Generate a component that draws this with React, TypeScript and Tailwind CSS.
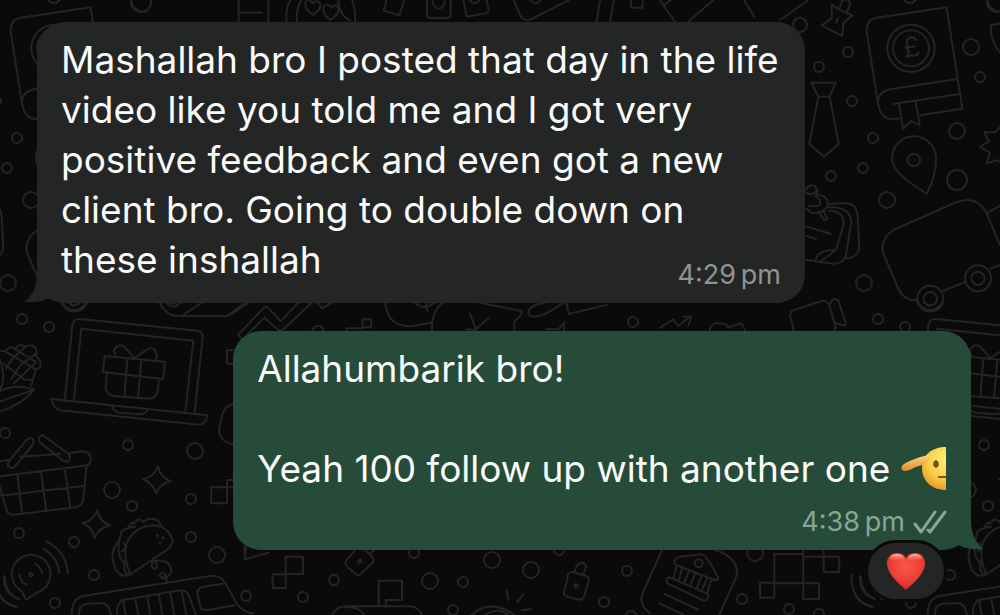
import type { ReactNode } from "react";

type Dot = [number, number, number];

const dots: Dot[] = [
  [141, 2, 10],
  [22, 319, 5],
  [49, 327, 5],
  [5, 433, 5],
  [128, 445, 5],
  [195, 451, 8],
  [112, 490, 8],
  [132, 506, 5],
  [191, 499, 5],
  [19, 533, 5],
  [74, 542, 5],
  [94, 575, 5],
  [55, 603, 5],
  [191, 537, 5],
  [217, 555, 8],
  [246, 596, 5],
  [303, 597, 5],
  [334, 580, 5],
  [414, 553, 5],
  [430, 581, 8],
  [463, 582, 5],
  [492, 560, 8],
  [531, 570, 8],
  [453, 610, 5],
  [559, 550, 5],
  [627, 571, 5],
  [604, 602, 5],
  [631, 617, 6],
  [755, 553, 8],
  [742, 599, 5],
  [789, 609, 5],
  [819, 614, 5],
  [318, 332, 6],
  [633, 322, 5],
  [800, 25, 7],
  [910, -3, 6],
  [848, 52, 5],
  [819, 67, 5],
  [852, 101, 5],
  [831, 176, 5],
  [873, 138, 5],
  [863, 168, 5],
  [957, 131, 8],
  [971, 47, 8],
  [980, 77, 5],
  [957, 180, 10],
  [887, 200, 8],
  [864, 283, 8],
];

function Doodles() {
  return (
    <svg
      aria-hidden="true"
      className="absolute inset-0 h-full w-full"
      fill="none"
      stroke="#242424"
      strokeLinejoin="round"
      strokeLinecap="round"
    >
      <defs>
        <g id="doodles">
          <g strokeWidth="2">
            {dots.map(([x, y, r]) => (
              <circle key={`${x}-${y}`} cx={x} cy={y} r={r} />
            ))}
          </g>

          {/* book, pin, tie, notes, car, cup */}
          <g transform="translate(780 0) scale(.3333)" strokeWidth="6">
            <path d="M500 22 285 54Q258 62 260 95L294 310Q302 360 342 357L357 355M420 346 547 326 500 22M528 238 335 267Q292 274 294 310M338 312 540 282" />
            <path d="M357 310 369 386 392 363 419 376 407 305" />
            <circle cx="393" cy="145" r="71" />
            <circle cx="393" cy="145" r="54" />
            <path d="M440 581Q336 520 336 475A66 66 0 0 1 468 475Q468 530 440 581Z" />
            <circle cx="401" cy="480" r="19" />
            <path d="M94 248H167L149 290H115ZM115 290 88 432 132 470 176 432 149 290" />
            <path d="M155 14 177 29 217 46 191 68 186 108 125 76 155 55ZM177 29 187 3Q200-8 211 8L201 38M174 54 169 68" />
            <path d="M78 570Q84 552 104 558L112 572 108 590 121 601 118 617 88 618M78 580Q100 587 108 575M108 585Q145 585 143 615Q132 645 94 638L78 625M116 635 133 661 142 657 130 630" />
            <path d="M143 613 198 609Q231 612 233 650L238 741Q235 774 198 775M145 622Q210 619 214 665L198 765Q190 793 158 791L78 779M145 632Q197 633 190 675L168 750 120 787 106 783Q112 748 168 750M80 680 153 702M80 708 107 717" />
            <path d="M410 901Q371 902 354 864L310 760Q299 719 340 690L530 606Q590 585 619 638L660 735M489 873 556 846M632 806 675 789M621 639 660 618 700 602" />
            <circle cx="451" cy="896" r="39" />
            <circle cx="451" cy="896" r="20" />
            <circle cx="594" cy="835" r="39" />
            <circle cx="594" cy="835" r="20" />
            <path d="M672 370 645 397 613 396 627 424 600 441 630 458 620 490 654 481 680 500" />
            <path d="M632 75 680 68M632 75Q632 140 675 170M622 0Q624 34 666 35" />
            <path d="M48 1020 31 950Q28 935 42 930L124 903Q140 899 147 914L167 980 155 1020M150 914Q152 900 165 897L175 902 197 969Q198 977 188 976L168 969" />
            <path d="M0 60 85 0M-77 50-132-38M-115-15-90-38" />
          </g>

          {/* laptop with a gift, corn, basket, taco, bus */}
          <g transform="translate(0 300) scale(.3333)" strokeWidth="6">
            <path d="M195 296 217 76Q220 56 240 57L592 92Q609 95 608 112L584 338M222 299 244 86 580 122 556 336" />
            <path d="M155 297 623 346Q617 374 597 374L182 331Q158 325 155 297ZM336 319Q345 338 360 338L420 343Q438 342 443 328" />
            <path d="M314 168 495 185 490 237 309 216ZM320 219 317 264Q322 285 340 288L450 296Q470 293 473 272L477 237M382 176 373 289M424 180 414 293M402 173 372 140Q351 128 342 153L347 170M405 173 447 145Q471 144 471 170L467 180" />
            <path d="M-20 150 15 154Q28 135 44 146Q58 128 76 140Q99 130 109 148L109 171Q126 181 120 203L107 210 94 257M15 154 72 187 107 208M44 146 108 186M76 140 42 170 18 205M109 160 63 194 34 237M108 187 42 250M10 190 72 238 94 240M0 180Q16 220 5 260L-15 290M-20 286Q37 245 102 269Q65 315 0 334M0 305 102 269" />
            <path d="M-10 485 27 480M60 470 180 462M205 460 248 454Q272 455 273 478Q272 495 252 497L-10 530M0 530-20 500M260 496 250 596Q248 615 230 622L40 644Q25 645 20 630L-10 530M0 587 252 558M52 524 66 637M123 514 138 628M194 504 210 618" />
            <path d="M24 488 77 423Q90 408 101 420Q102 431 94 441L44 500Q32 509 24 498ZM119 427Q113 410 128 405L207 463Q215 478 202 486L190 482Z" />
            <path d="M474 498Q480 532 513 544Q481 550 468 580Q460 550 429 537Q462 532 474 498ZM291 631Q299 666 330 676Q299 682 283 713Q277 680 247 670Q279 663 291 631Z" />
            <path d="M390 820Q360 750 393 708Q430 665 486 681Q507 690 518 722Q515 740 500 750L390 824Q360 835 346 805Q325 755 357 724L365 693 386 683Q390 668 405 668Q414 650 430 666Q445 652 465 658Q480 662 484 681M357 724Q350 772 373 787M365 755Q383 740 370 730M373 787Q370 820 383 820M386 683 405 680M460 779Q448 803 464 806Q476 805 465 782Q510 778 514 810Q512 832 488 834Q471 826 486 818Q500 820 500 845" />
            <circle cx="472" cy="708" r="2" />
            <circle cx="489" cy="714" r="2" />
            <circle cx="480" cy="729" r="2" />
            <path d="M65 873A58 58 0 1 1 110 878L78 900ZM58 822Q61 848 81 854M105 791Q123 800 127 822M133 748Q174 772 177 818M139 724Q202 756 203 822M12 828Q10 880 53 896M0 890Q18 915 47 920" />
            <circle cx="93" cy="824" r="5" />
            <path d="M215 950Q213 895 250 888L630 828Q662 825 676 850L710 910Q730 938 760 940M237 950Q234 918 255 912L305 909Q330 911 333 950M352 950Q348 910 368 900L540 871Q560 870 567 888L590 950M370 903 378 950M406 898 416 950M442 890 452 950M477 884 488 950M511 878 524 950M545 872 560 950M592 878 600 918Q603 932 620 931L704 916M592 878Q595 862 612 860L676 850" />
            <path d="M700 150H681V191H702M702 540H681V610H634V562H702M702 312Q670 315 664 360Q640 420 702 434M740 735 734 777" />
            <path d="M185 8Q222 52 260 8M204 8Q222 26 240 8M478 8Q500 48 535 48H680L750-2M498 8Q520 32 540 8M545 48 620-2M510 8Q518 15 526 8" />
          </g>

          {/* blocks, padlocks and the bank card */}
          <g transform="translate(220 530) scale(.3333)" strokeWidth="6">
            <path d="M197 80H249V132H197ZM158 133H197V174H158ZM73 50 75 88 145 68M404 62 378 93Q373 103 382 110L408 133Q418 138 425 130L459 97Q464 88 455 79L432 58M448 72 466 58M476 152H546V210H498V230M476 152V228M335 260Q345 230 378 229H570Q600 232 607 260M380 232Q425 230 434 260M861 181 865 210M910 194 891 217M905 241 932 238M750 260Q810 200 890 260M790 260Q830 225 870 260" />
            <circle cx="419" cy="94" r="5" />
          </g>
          <g transform="translate(540 530) scale(.3333)" strokeWidth="6">
            <path d="M98 125Q77 130 83 145L72 185Q70 197 82 200L117 209Q128 210 132 200L146 153Q148 142 138 138L98 127ZM104 124 110 108Q126 88 139 108L130 134" />
            <circle cx="109" cy="168" r="5" />
            <path d="M366 60 306 195Q298 225 330 250M525 60Q602 85 589 140L538 255M403 98Q402 84 420 80L485 73Q500 75 533 140Q538 152 523 150L408 105ZM388 142 500 190Q509 199 502 207Q497 214 488 210L382 160Q376 144 388 142ZM410 108 400 146M427 114 416 153M448 122 432 160M466 130 450 168M485 137 470 175M502 144 485 182M514 150 502 188M373 192 475 239M360 221 430 254" />
            <circle cx="476" cy="100" r="12" />
            <path d="M703 72H790V160H703ZM790 80H851M851 60V126H898V80H851M790 60V80M660 158H703V203H660ZM790 160H837V207H790ZM935 132Q930 210 997 231M963 140Q963 190 1005 207" />
          </g>

          {/* strip between the two bubbles */}
          <g transform="translate(230 290) scale(.3333)" strokeWidth="6">
            <path d="M0 75 53 40M24 135 100 55Q108 45 116 55L152 94 205 38M24 135 38 148 103 83 148 122 160 118 245 38M263 38 276 55 305 38M465 38Q475 114 545 108L604 98M640 38Q605 60 606 122M555 38Q585 65 612 38M584 20 592 65M750 38 875 63Q882 68 853 95V122M720 70 737 118 775 85M708 118 740 120M1000 38Q920 95 898 75Q885 48 945 38M1010 38 1016 72 1130 45M950 118H985L1003 98V122M398 88H424V112H398ZM350 122V115H398" />
            <path d="M1292 112 1330 88 1345 108 1381 80M1358 80H1384L1376 106M1440 120Q1445 88 1490 104L1496 112M1496 112 1535 100 1545 120" />
          </g>

          {/* cards peeking out above the first bubble */}
          <g transform="translate(200 0) scale(.3333)" strokeWidth="6">
            <path d="M116 0V66M205 0V66M116 38H186M260 66Q256 20 272 0M291 66Q287 30 304 0M465 66Q468 30 456 0M415 0Q415 42 450 62M340 45Q310 25 317 6Q328-8 338 10Q352-4 361 12Q365 25 340 45ZM390 60Q365 38 371 20Q382 5 393 23Q410 5 416 30Q414 45 390 60ZM560 0 551 32 598 46 613 0M681 0V45Q682 54 692 54H742Q752 54 752 44V0M698 0Q700 25 716 26Q732 24 735 0M790 0 800 50 860 40Q868 36 865 26L860 0M810 0Q825 20 838 0M941 0 960 45Q972 65 992 58L1107 0M992 0Q1005 20 1022 0M1200 0 1190 66M1242 0 1230 66M1293 0V23H1328V0M1380 0 1424 64M1394 14 1412 0M1540 0 1464 66" />
          </g>
          <text
            x="903"
            y="57"
            transform="rotate(-8 911 48)"
            fill="#242424"
            stroke="none"
            className="font-['Inter'] text-[28px]"
          >
            £
          </text>
        </g>
      </defs>
      <use href="#doodles" x="-856" />
      <use href="#doodles" />
      <use href="#doodles" x="856" />
    </svg>
  );
}

function SaluteEmoji() {
  return (
    <svg
      role="img"
      aria-label="saluting face"
      viewBox="0 0 45 44"
      className="inline-block h-11 w-[45px] align-[-8px]"
    >
      <defs>
        <radialGradient id="face" cx="45" cy="14" r="30" gradientUnits="userSpaceOnUse">
          <stop offset="0" stopColor="#fff07c" />
          <stop offset="0.6" stopColor="#fbcf48" />
          <stop offset="1" stopColor="#e99b28" />
        </radialGradient>
        <linearGradient id="hand" x1="0" y1="0" x2="0" y2="1">
          <stop offset="0" stopColor="#ffd977" />
          <stop offset="1" stopColor="#e08a2a" />
        </linearGradient>
      </defs>
      <path d="M45 1C31 1 21 9 21 22s10 22 24 22Z" fill="url(#face)" />
      <path
        d="M29 9C20 10 10 14 3 18C-1 21 0 25 4 25C9 25 13 21 18 20C22 19 26 17 28 13Z"
        fill="url(#hand)"
      />
      <ellipse cx="35" cy="18" rx="2.7" ry="3.8" fill="#74501b" />
      <path d="M38 31H45" stroke="#74501b" strokeWidth="2" strokeLinecap="round" />
    </svg>
  );
}

function HeartEmoji() {
  return (
    <svg role="img" aria-label="red heart" viewBox="0 0 38 37" className="h-[37px] w-[38px]">
      <defs>
        <radialGradient id="heart" cx="0.5" cy="0.35" r="0.65">
          <stop offset="0" stopColor="#f8584c" />
          <stop offset="0.6" stopColor="#ec4036" />
          <stop offset="1" stopColor="#cf2b25" />
        </radialGradient>
        <linearGradient id="shine" x1="0" y1="0" x2="0" y2="1">
          <stop offset="0" stopColor="#ffc9c2" stopOpacity="0.9" />
          <stop offset="1" stopColor="#f8584c" stopOpacity="0" />
        </linearGradient>
      </defs>
      <path
        d="M19 37C15 33 0 22 0 10C0 4 4 0 10 0C14 0 18 2 19 6C20 2 24 0 28 0C34 0 38 4 38 10C38 22 23 33 19 37Z"
        fill="url(#heart)"
      />
      <ellipse cx="10" cy="5" rx="7" ry="4" fill="url(#shine)" />
      <ellipse cx="28" cy="5" rx="7" ry="4" fill="url(#shine)" />
    </svg>
  );
}

function ReadTicks() {
  return (
    <svg
      role="img"
      aria-label="delivered"
      viewBox="0 0 34 24"
      className="h-6 w-[34px]"
      fill="none"
      stroke="currentColor"
      strokeWidth="3"
      strokeLinecap="round"
      strokeLinejoin="round"
    >
      <path d="M2 14 8 22 22 2M15 20 17 22 32 2" />
    </svg>
  );
}

function Message({ children }: { children: ReactNode }) {
  return <p className="text-[37px] leading-[50px] text-[#fafafa]">{children}</p>;
}

export default function App() {
  return (
    <main className="relative min-h-screen overflow-hidden bg-[#0a0a0a] pt-[22px] pr-[29px] pb-8 pl-[37px] font-['Inter','Liberation_Sans',sans-serif]">
      <Doodles />

      <div className="relative flex flex-col gap-7">
        <article className="relative grid w-[83%] max-w-[768px] rounded-[28px] bg-[#242625] pt-[13px] pr-4 pb-[18px] pl-6">
          <svg
            aria-hidden="true"
            viewBox="0 0 40 40"
            className="absolute bottom-0 -left-[13px] h-10 w-10"
            fill="#242625"
          >
            <path d="M13 0V14C12 25 8 33 0 39C8 40 18 39 25 35L40 40V0Z" />
          </svg>
          <div className="relative col-start-1 row-start-1">
            <Message>
              Mashallah bro I posted that day in the life
              <br />
              video like you told me and I got very
              <br />
              positive feedback and even got a new
              <br />
              client bro. Going to double down on
              <br />
              these inshallah
            </Message>
          </div>
          <time className="relative col-start-1 row-start-1 mr-2 self-end justify-self-end text-[27px] leading-5 text-[#919392]">
            4:29&thinsp;pm
          </time>
        </article>

        <article className="relative w-[79%] self-end rounded-[28px] bg-[#264c39] pt-[13px] pr-4 pb-3 pl-6">
          <svg
            aria-hidden="true"
            viewBox="0 0 40 40"
            className="absolute -right-[12px] bottom-0 h-10 w-10"
            fill="#264c39"
          >
            <path d="M28 0V14C29 25 33 33 40 39C32 40 22 39 16 35L0 40V0Z" />
          </svg>
          <div className="relative">
            <Message>
              Allahumbarik bro!
              <br />
              <br />
              Yeah 100 follow up with another one <SaluteEmoji />
            </Message>
            <div className="mt-3 mr-2 flex h-8 items-center justify-end gap-2 text-[#88a595]">
              <time className="text-[27px] leading-8">4:38&thinsp;pm</time>
              <ReadTicks />
            </div>
          </div>
          <button
            type="button"
            aria-label="Heart reaction"
            className="absolute right-6 -bottom-[52px] flex h-[62px] w-[82px] items-center justify-center rounded-full border-3 border-[#0a0a0a] bg-[#242625]"
          >
            <HeartEmoji />
          </button>
        </article>
      </div>
    </main>
  );
}
